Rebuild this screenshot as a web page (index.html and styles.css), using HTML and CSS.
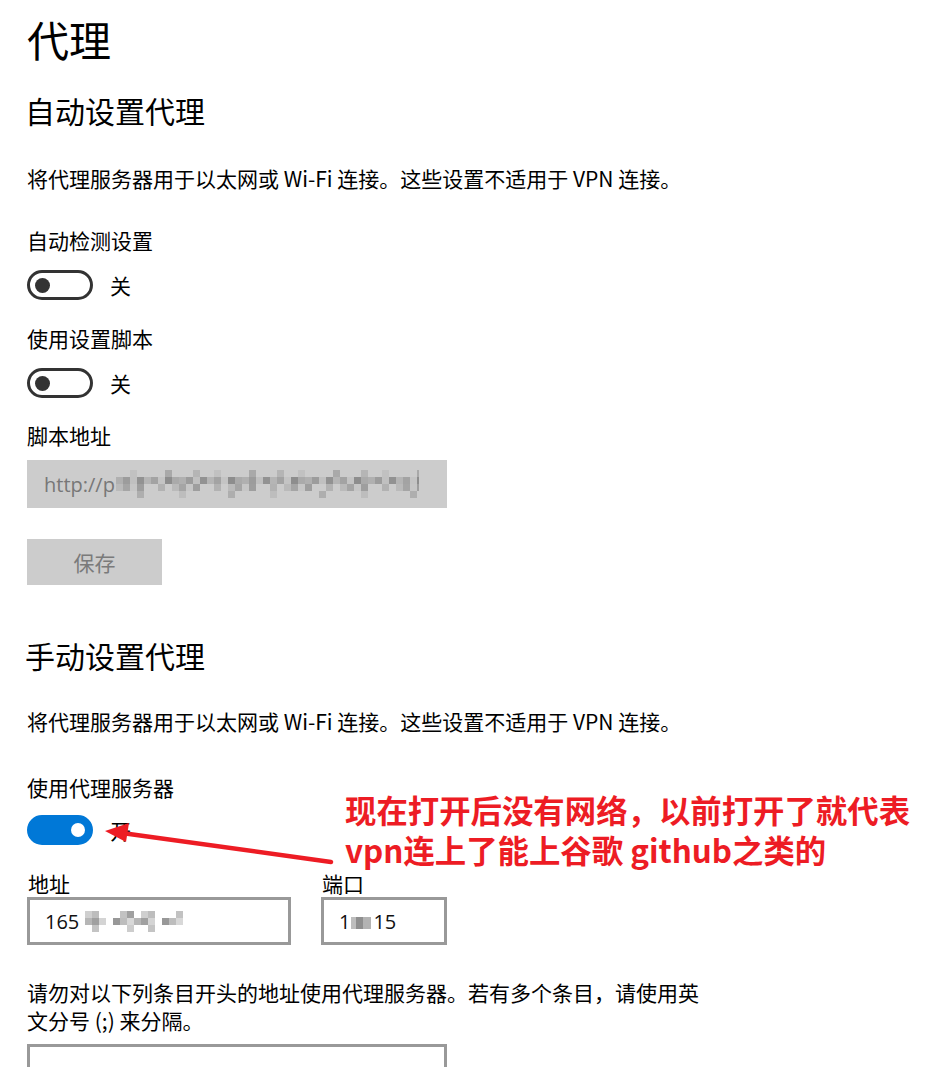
FILE: index.html
```html
<!DOCTYPE html>
<html lang="zh-CN">
<head>
<meta charset="utf-8">
<title>代理</title>
<link rel="stylesheet" href="styles.css">
</head>
<body>
<main class="page">
  <h1 class="title">代理</h1>

  <h2 class="heading heading-auto">自动设置代理</h2>
  <p class="desc desc-auto">将代理服务器用于以太网或 Wi-Fi 连接。这些设置不适用于 VPN 连接。</p>

  <div class="label label-detect">自动检测设置</div>
  <div class="toggle-row row-detect">
    <span class="toggle off"><span class="knob"></span></span>
    <span class="state">关</span>
  </div>

  <div class="label label-script">使用设置脚本</div>
  <div class="toggle-row row-script">
    <span class="toggle off"><span class="knob"></span></span>
    <span class="state">关</span>
  </div>

  <div class="label label-url">脚本地址</div>
  <div class="url-box"><span class="url-text">http://p</span><span class="mosaic mosaic-url"></span></div>

  <button class="save" type="button">保存</button>

  <h2 class="heading heading-manual">手动设置代理</h2>
  <p class="desc desc-manual">将代理服务器用于以太网或 Wi-Fi 连接。这些设置不适用于 VPN 连接。</p>

  <div class="label label-proxy">使用代理服务器</div>
  <div class="toggle-row row-proxy">
    <span class="toggle on"><span class="knob"></span></span>
    <span class="state">开</span>
  </div>

  <div class="proxy-row">
    <div class="field">
      <div class="label">地址</div>
      <div class="input input-addr"><span>165</span><span class="mosaic mosaic-addr"></span></div>
    </div>
    <div class="field">
      <div class="label">端口</div>
      <div class="input input-port"><span>1</span><span class="mosaic mosaic-port"></span><span>15</span></div>
    </div>
  </div>

  <p class="note">请勿对以下列条目开头的地址使用代理服务器。若有多个条目，请使用英文分号 (;) 来分隔。</p>
  <div class="textarea"></div>

  <div class="annotation">
    <span class="annotation-line">现在打开后没有网络，以前打开了就代表</span>
    <span class="annotation-line">vpn连上了能上谷歌 github之类的</span>
  </div>
  <svg class="arrow" width="240" height="60" viewBox="0 0 240 60" aria-hidden="true">
    <line x1="231" y1="47" x2="22" y2="18" stroke="#ed1c24" stroke-width="4.5" stroke-linecap="round"/>
    <polygon points="5,16 29,8 26,27" fill="#ed1c24"/>
  </svg>
</main>
</body>
</html>
```
FILE: styles.css
```css
html, body {
  margin: 0;
  padding: 0;
  background: #ffffff;
}

.page {
  position: relative;
  display: flex;
  flex-direction: column;
  align-items: flex-start;
  padding: 14px 0 0 27px;
  height: 1067px;
  box-sizing: border-box;
  overflow: hidden;
  font-family: "Noto Sans CJK SC", "Noto Sans", sans-serif;
  color: #000;
}
.page > * {
  flex-shrink: 0;
}

.title {
  margin: 0;
  font-size: 42px;
  line-height: 50px;
  font-weight: 400;
}

.heading {
  margin: 0 0 0 -2px;
  font-size: 30px;
  line-height: 40px;
  font-weight: 400;
}
.heading-auto { margin-top: 26px; }
.heading-manual { margin-top: 50px; }

.desc, .label, .note {
  margin: 0;
  font-size: 21px;
  line-height: 28px;
  font-weight: 400;
}
.desc-auto { margin-top: 34px; }
.desc-manual { margin-top: 32px; }

.label-detect { margin-top: 34px; }
.label-script { margin-top: 24px; }
.label-url { margin-top: 23px; }
.label-proxy { margin-top: 38px; }

.toggle-row {
  display: flex;
  align-items: center;
  gap: 17px;
  height: 30px;
}
.row-detect { margin-top: 16px; }
.row-script { margin-top: 16px; }
.row-proxy { margin-top: 14px; }

.toggle {
  box-sizing: border-box;
  flex-shrink: 0;
  width: 66px;
  height: 30px;
  border-radius: 15px;
  border: 3px solid #333;
  display: flex;
  align-items: center;
  padding: 0 5px;
}
.toggle .knob {
  width: 15px;
  height: 15px;
  border-radius: 50%;
  background: #333;
}
.toggle.on {
  background: #0078d7;
  border-color: #0078d7;
  justify-content: flex-end;
}
.toggle.on .knob {
  width: 14px;
  height: 14px;
  background: #fff;
}

.state {
  font-size: 21px;
  line-height: 28px;
}

.url-box {
  margin-top: 11px;
  box-sizing: border-box;
  width: 420px;
  height: 48px;
  background: #cccccc;
  display: flex;
  align-items: center;
  padding-left: 17px;
  font-size: 21px;
  color: #777;
}
.url-text {
  font-family: "Open Sans", "Noto Sans", sans-serif;
  font-size: 20px;
}

.mosaic {
  display: inline-block;
  flex-shrink: 0;
  background-repeat: no-repeat;
}
.mosaic-url {
  width: 303px;
  height: 28px;
  margin-left: 1px;
  background-image:
    repeating-linear-gradient(90deg, transparent 0 14px, #c1c1c1 14px 21px, transparent 21px 49px, #a9a9a9 49px 56px, transparent 56px 77px, #b5b5b5 77px 84px),
    repeating-linear-gradient(90deg, #b0b0b0 0 7px, #9c9c9c 7px 14px, #c0c0c0 14px 21px, #929292 21px 28px, #b5b5b5 28px 35px, #a3a3a3 35px 42px, #c4c4c4 42px 49px, #8d8d8d 49px 56px, #aaa 56px 63px),
    repeating-linear-gradient(90deg, #bababa 0 7px, #a5a5a5 7px 14px, #c6c6c6 14px 21px, #9e9e9e 21px 28px, transparent 28px 42px, #b2b2b2 42px 49px, transparent 49px 56px),
    repeating-linear-gradient(90deg, transparent 0 21px, #aeaeae 21px 28px, transparent 28px 63px, #bdbdbd 63px 70px, transparent 70px 91px);
  background-size: 100% 7px, 100% 7px, 100% 7px, 100% 7px;
  background-position: 0 0, 0 7px, 0 14px, 0 21px;
}

.save {
  margin-top: 31px;
  width: 135px;
  height: 46px;
  border: none;
  background: #cccccc;
  color: #7a7a7a;
  font-family: "Noto Sans CJK SC", sans-serif;
  font-size: 21px;
  padding: 0;
}

.proxy-row {
  margin-top: 24px;
  display: flex;
  gap: 30px;
}
.field {
  display: flex;
  flex-direction: column;
}
.field .label {
  margin-left: 1px;
}
.input {
  box-sizing: border-box;
  height: 48px;
  border: 3px solid #999;
  display: flex;
  align-items: center;
  padding-left: 15px;
  font-family: "Open Sans", "Noto Sans", sans-serif;
  font-size: 20px;
  color: #111;
}
.input-addr { width: 264px; }
.input-port { width: 126px; }

.mosaic-addr {
  width: 98px;
  height: 21px;
  margin-left: 6px;
  background-image:
    repeating-linear-gradient(90deg, #cfcfcf 0 7px, #bdbdbd 7px 14px, transparent 14px 35px, #c2c2c2 35px 42px, #a0a0a0 42px 49px, transparent 49px 56px),
    repeating-linear-gradient(90deg, #b6b6b6 0 7px, #a0a0a0 7px 14px, #d4d4d4 14px 21px, transparent 21px 28px, #989898 28px 35px, #bdbdbd 35px 42px, #d8d8d8 42px 49px),
    repeating-linear-gradient(90deg, transparent 0 7px, #c4c4c4 7px 14px, transparent 14px 42px, #cdcdcd 42px 49px, transparent 49px 56px);
  background-size: 100% 7px, 100% 7px, 100% 7px;
  background-position: 0 0, 0 7px, 0 14px;
}
.mosaic-port {
  width: 20px;
  height: 12px;
  margin: 4px 2px 0 1px;
  background-image: linear-gradient(90deg, #bdbdbd 0 5px, #8f8f8f 5px 12px, #b3b3b3 12px 20px);
}

.note {
  margin-top: 33px;
  width: 690px;
}

.textarea {
  margin-top: 10px;
  box-sizing: border-box;
  width: 420px;
  height: 60px;
  border: 3px solid #999;
}

.annotation {
  position: absolute;
  left: 345px;
  top: 790px;
  display: flex;
  flex-direction: column;
  font-size: 31.4px;
  line-height: 40px;
  font-weight: 700;
  color: #ed1c24;
  white-space: nowrap;
}
.annotation-line {
  display: block;
  height: 40px;
}

.arrow {
  position: absolute;
  left: 100px;
  top: 815px;
}
```
